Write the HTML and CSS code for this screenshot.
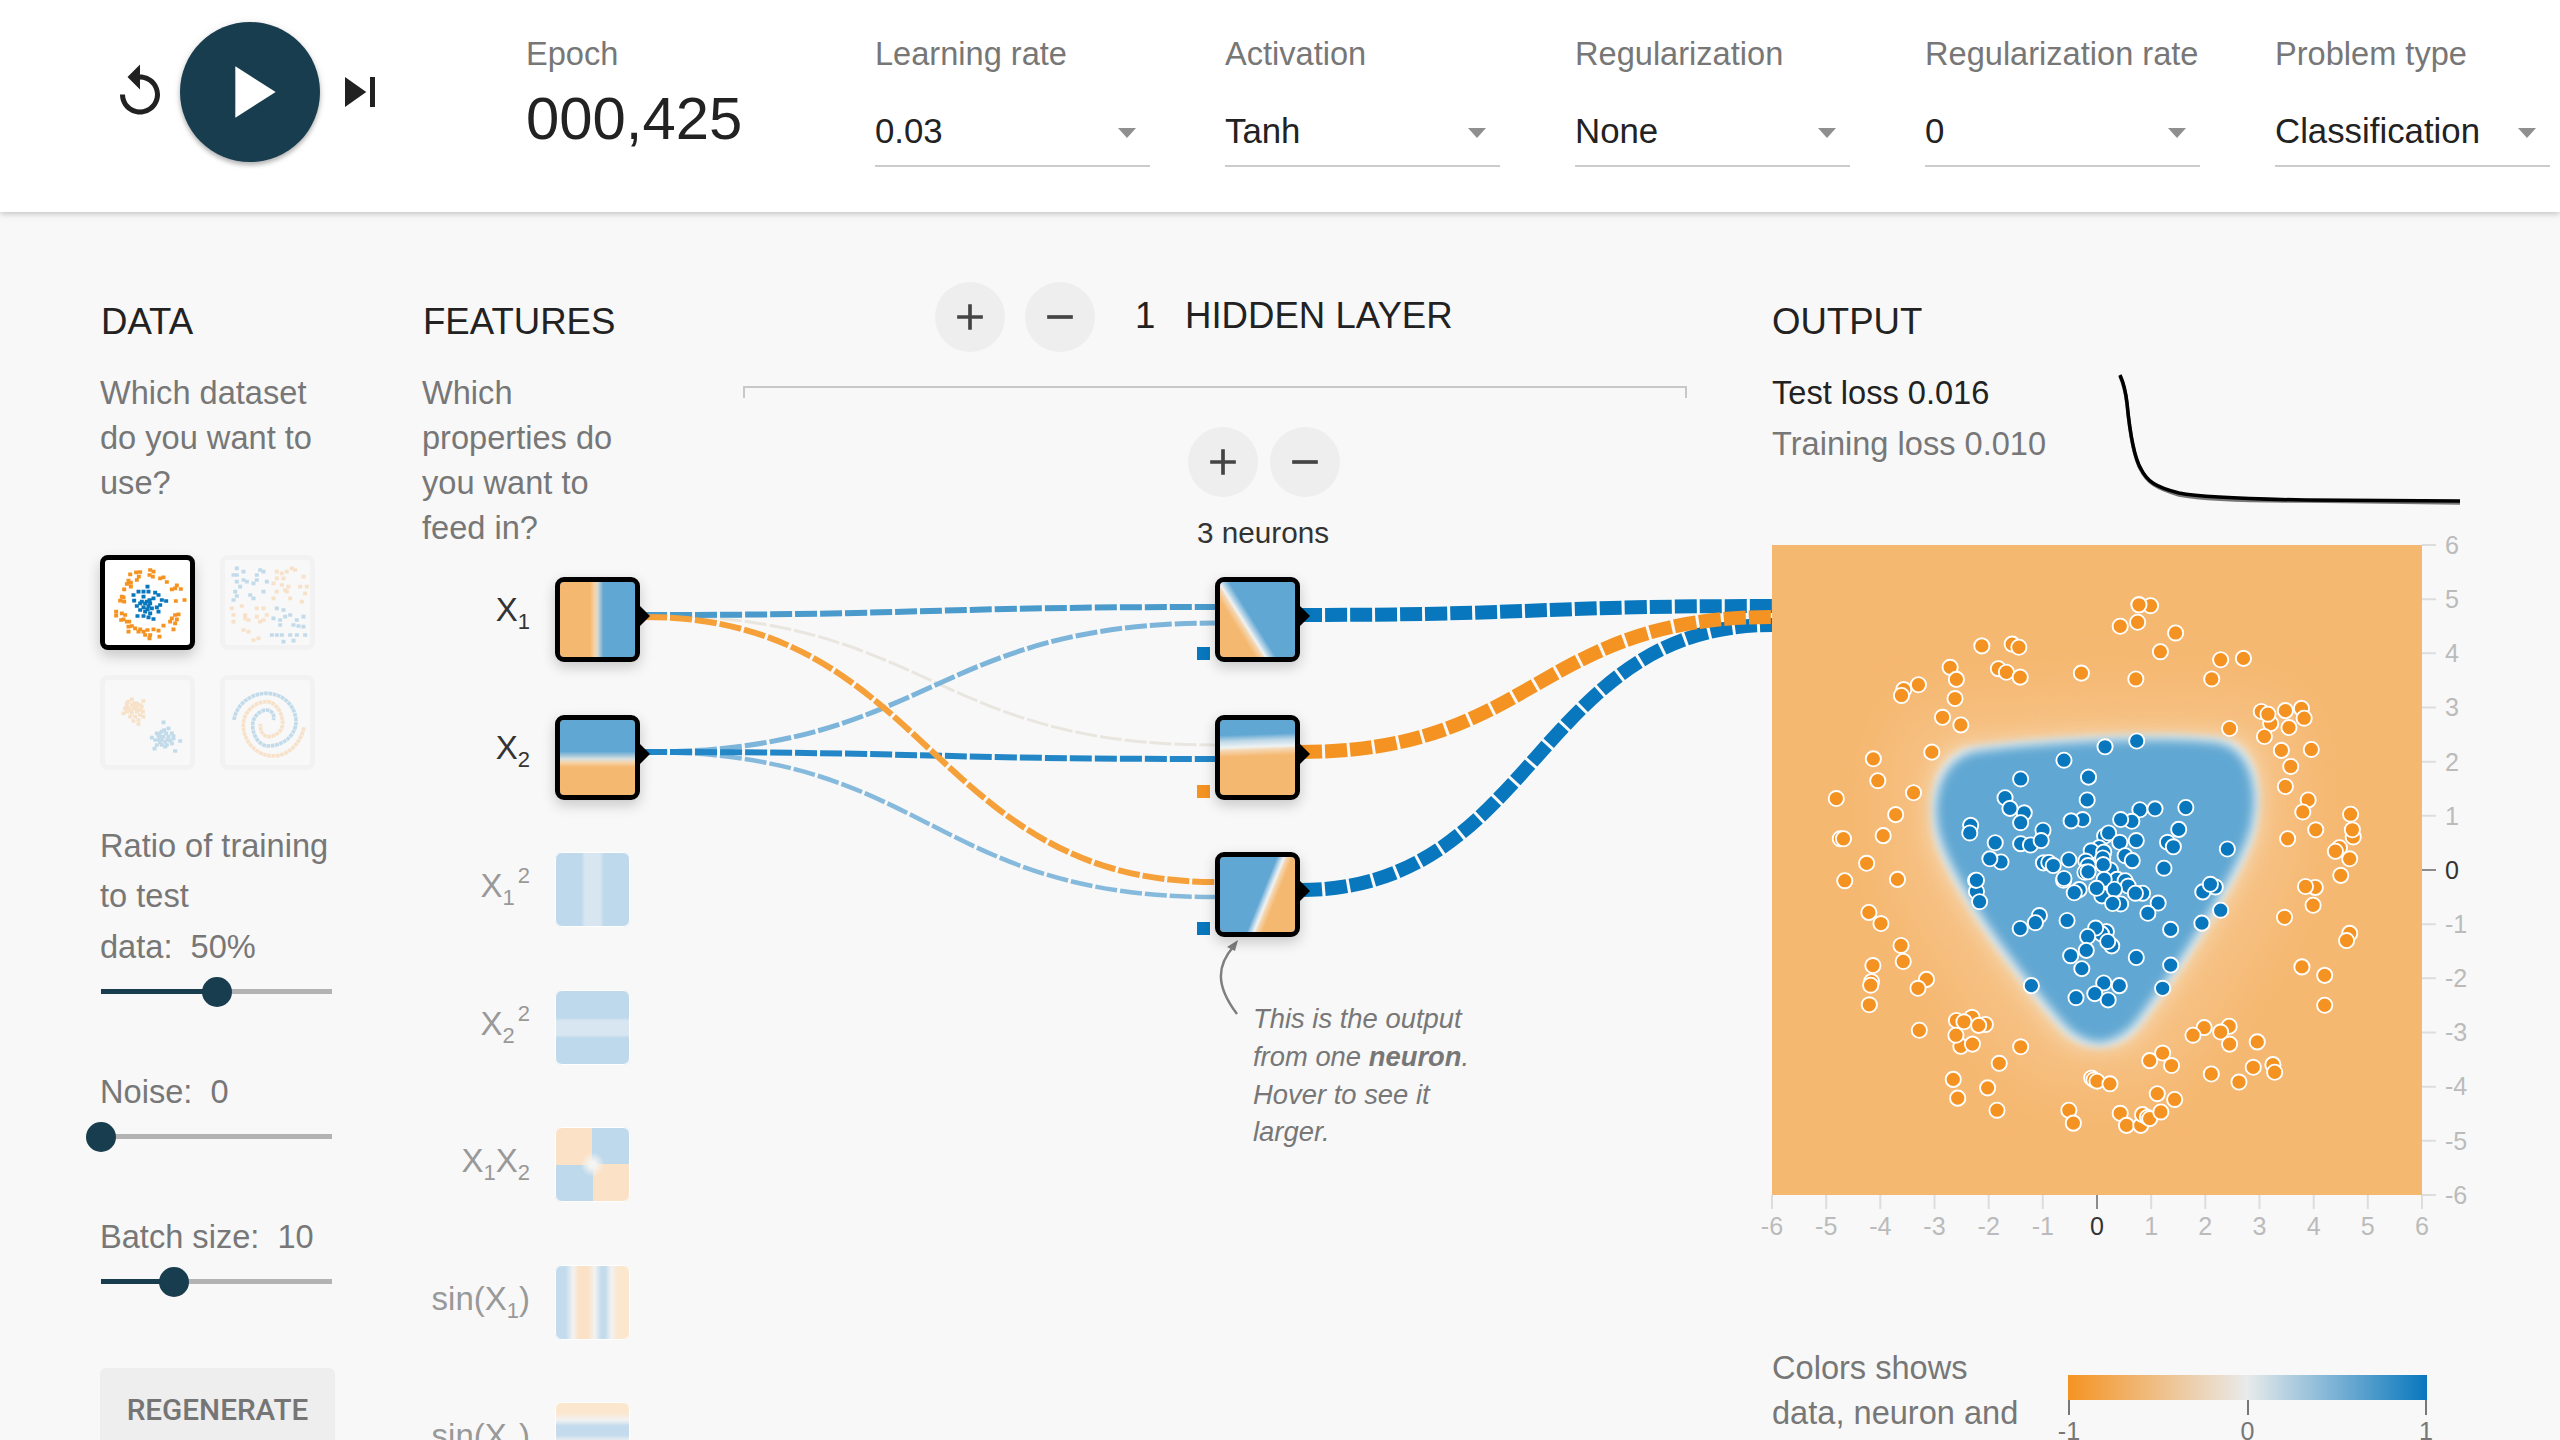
FILE: index.html
```html
<!DOCTYPE html>
<html lang="en">
<head>
<meta charset="utf-8">
<title>A Neural Network Playground</title>
<link rel="stylesheet" href="styles.css">
</head>
<body>
<header class="topbar">
  <div class="playback">
    <svg class="icon-reset" viewBox="0 0 24 24"><path d="M12 5V1L7 6l5 5V7c3.31 0 6 2.69 6 6s-2.69 6-6 6-6-2.69-6-6H4c0 4.42 3.58 8 8 8s8-3.58 8-8-3.58-8-8-8z"/></svg>
    <div class="play"><svg class="icon-play" viewBox="0 0 24 24"><path d="M8 5v14l11-7z"/></svg></div>
    <svg class="icon-step" viewBox="0 0 24 24"><path d="M6 18l8.5-6L6 6v12zM16 6v12h2V6h-2z"/></svg>
  </div>
  <div class="control epoch"><div class="label">Epoch</div><div class="epoch-value">000,425</div></div>
  <div class="control"><div class="label">Learning rate</div><div class="select">0.03</div></div>
  <div class="control"><div class="label">Activation</div><div class="select">Tanh</div></div>
  <div class="control"><div class="label">Regularization</div><div class="select">None</div></div>
  <div class="control"><div class="label">Regularization rate</div><div class="select">0</div></div>
  <div class="control"><div class="label">Problem type</div><div class="select">Classification</div></div>
</header>

<main class="main">
  <section class="col-data">
    <h4 class="heading">Data</h4>
    <p class="copy">Which dataset<br>do you want to<br>use?</p>
    <div class="datasets">
      <div class="dataset selected">
        <svg viewBox="135 120 255 255">
          <path class="dot-o" d="M210 163h1M228 157h1M240 156h1M236 170h1M230 180h1M205 182h1M212 188h1M200 192h1M212 200h1M192 208h1M270 150h1M280 155h1M268 165h1M278 170h1M300 175h1M310 172h1M320 186h1M335 208h1M350 196h1M362 207h1M345 205h1M185 230h1M190 232h1M180 242h1M192 245h1M347 243h1M373 240h1M168 275h1M168 287h1M185 280h1M195 285h1M190 298h1M183 300h1M200 305h1M207 305h1M345 285h1M355 283h1M335 295h1M350 298h1M330 305h1M345 310h1M310 317h1M340 328h1M205 320h1M215 318h1M225 325h1M240 328h1M205 335h1M235 335h1M250 335h1M262 330h1M255 345h1M270 345h1M268 355h1M295 332h1M298 350h1M280 328h1"/>
          <path class="dot-b" d="M235 215h1M250 215h1M262 200h1M265 215h1M285 218h1M220 225h1M222 242h1M295 225h1M305 240h1M318 243h1M300 255h1M250 230h1M268 240h1M280 235h1M240 250h1M230 258h1M250 262h1M265 258h1M275 265h1M290 262h1M240 270h1M255 275h1M270 280h1M295 275h1M232 288h1M250 288h1M265 292h1M280 297h1M260 245h1M245 245h1M255 250h1M270 250h1M262 268h1"/>
        </svg>
      </div>
      <div class="dataset">
        <svg viewBox="495 120 255 255">
          <path class="dot-b" d="M530 145h1M520 165h1M530 165h1M550 155h1M530 185h1M550 180h1M560 185h1M600 150h1M610 155h1M590 165h1M580 190h1M590 180h1M620 185h1M540 200h1M525 215h1M520 240h1M530 228h1M570 225h1M580 235h1M610 215h1M650 265h1M670 270h1M640 295h1M660 300h1M675 290h1M690 285h1M730 290h1M710 300h1M700 315h1M715 318h1M730 320h1M650 345h1M665 345h1M690 345h1M710 345h1M670 365h1M700 362h1M735 345h1M635 345h1M660 315h1"/>
          <path class="dot-o" d="M650 155h1M665 160h1M680 155h1M695 145h1M705 150h1M650 175h1M670 175h1M640 190h1M665 195h1M685 200h1M675 210h1M650 215h1M680 215h1M640 235h1M690 235h1M730 170h1M720 200h1M740 200h1M735 220h1M725 245h1M515 265h1M545 258h1M520 285h1M555 285h1M565 300h1M590 265h1M610 265h1M590 290h1M610 300h1M600 305h1M620 285h1M520 305h1M550 330h1M565 335h1M580 360h1M595 355h1M555 295h1"/>
        </svg>
      </div>
      <div class="dataset">
        <svg viewBox="135 480 255 255">
          <path class="dot-o" d="M190 580h1M200 550h1M215 538h1M230 550h1M250 543h1M205 565h1M220 565h1M240 570h1M250 590h1M210 590h1M225 590h1M235 600h1M220 603h1M235 612h1M195 565h1M215 555h1M230 575h1M245 560h1M205 545h1M200 575h1M215 578h1M240 585h1M228 560h1M212 572h1M240 555h1M222 550h1M200 560h1M232 568h1M248 575h1"/>
          <path class="dot-b" d="M310 607h1M275 653h1M290 640h1M305 635h1M325 625h1M335 640h1M340 655h1M295 660h1M310 650h1M325 650h1M290 675h1M305 675h1M320 675h1M335 670h1M283 686h1M345 693h1M360 663h1M300 650h1M315 665h1M285 660h1M300 668h1M318 640h1M330 662h1M312 630h1M305 660h1M322 660h1M298 640h1M340 648h1M315 680h1M295 648h1"/>
        </svg>
      </div>
      <div class="dataset">
        <svg viewBox="495 480 255 255">
          <path class="spiral-b" d="M522 600C530 550 575 520 620 520C670 520 708 560 708 605C708 645 670 678 625 678C600 678 578 650 578 615C578 590 600 570 620 570C635 570 645 585 640 600"/>
          <path class="spiral-o" d="M732 622C722 670 685 708 640 708C590 708 550 665 550 615C550 575 585 545 620 545C648 545 668 580 668 610C668 635 645 650 625 650C610 650 598 630 602 612"/>
        </svg>
      </div>
    </div>
    <div class="setting first">Ratio of training<br>to test<br>data:&nbsp; 50%</div>
    <div class="slider" style="--value:50%"><div class="slider-fill"></div><div class="slider-thumb"></div></div>
    <div class="setting">Noise:&nbsp; 0</div>
    <div class="slider" style="--value:0%"><div class="slider-fill"></div><div class="slider-thumb"></div></div>
    <div class="setting">Batch size:&nbsp; 10</div>
    <div class="slider" style="--value:31.6%"><div class="slider-fill"></div><div class="slider-thumb"></div></div>
    <div class="regenerate">REGENERATE</div>
  </section>

  <section class="col-net">
    <svg class="links" viewBox="423 212 1349 1228">
      <g class="link">
        <path class="l-gray" d="M645 615C930 615 930 745 1215 745"/>
        <path class="l-mid1" d="M645 615C930 615 930 607 1215 607"/>
        <path class="l-light1" d="M645 752C930 752 930 623 1215 623"/>
        <path class="l-light2" d="M645 752C930 752 930 897 1215 897"/>
        <path class="l-mid2" d="M645 752C930 752 930 759 1215 759"/>
        <path class="l-orange" d="M645 617C930 617 930 882 1215 882"/>
        <path class="l-out b" d="M1300 615C1536 615 1536 606 1772 606"/>
        <path class="l-out b" d="M1300 890C1536 890 1536 625 1772 625"/>
        <path class="l-out o" d="M1300 752C1536 752 1536 617 1772 617"/>
      </g>
      <path class="note-arrow" d="M1237 1014C1215 985 1217 965 1234 946"/>
      <path class="note-head" d="M1238 940L1227 947L1235 951Z"/>
    </svg>

    <div class="col-features">
      <h4 class="heading">Features</h4>
      <p class="copy">Which<br>properties do<br>you want to<br>feed in?</p>
      <div class="feature-list">
        <div class="feature on"><span class="f-label">X<sub>1</sub></span><div class="node hm-x1"></div></div>
        <div class="feature on"><span class="f-label">X<sub>2</sub></span><div class="node hm-x2"></div></div>
        <div class="feature"><span class="f-label">X<sub>1</sub><sup>2</sup></span><div class="thumb hm-x1s"></div></div>
        <div class="feature"><span class="f-label">X<sub>2</sub><sup>2</sup></span><div class="thumb hm-x2s"></div></div>
        <div class="feature"><span class="f-label">X<sub>1</sub>X<sub>2</sub></span><div class="thumb hm-xx"></div></div>
        <div class="feature"><span class="f-label">sin(X<sub>1</sub>)</span><div class="thumb hm-sin1"></div></div>
        <div class="feature"><span class="f-label">sin(X<sub>2</sub>)</span><div class="thumb hm-sin2"></div></div>
      </div>
    </div>

    <div class="col-hidden">
      <div class="layers-head">
        <div class="round"><svg viewBox="0 0 24 24"><path d="M19 13h-6v6h-2v-6H5v-2h6V5h2v6h6v2z"/></svg></div>
        <div class="round"><svg viewBox="0 0 24 24"><path d="M19 13H5v-2h14v2z"/></svg></div>
        <div class="layers-count">1</div>
        <div class="layers-title">HIDDEN LAYER</div>
      </div>
      <div class="bracket"></div>
      <div class="layer">
        <div class="layer-btns">
          <div class="round"><svg viewBox="0 0 24 24"><path d="M19 13h-6v6h-2v-6H5v-2h6V5h2v6h6v2z"/></svg></div>
          <div class="round"><svg viewBox="0 0 24 24"><path d="M19 13H5v-2h14v2z"/></svg></div>
        </div>
        <div class="neurons">3 neurons</div>
        <div class="neuron-list">
          <div class="neuron-row"><i class="bias b"></i><div class="node hm-h1"></div></div>
          <div class="neuron-row"><i class="bias o"></i><div class="node hm-h2"></div></div>
          <div class="neuron-row"><i class="bias b"></i><div class="node hm-h3"></div></div>
        </div>
      </div>
    </div>

    <div class="callout">This is the output<br>from one <b>neuron</b>.<br>Hover to see it<br>larger.</div>
  </section>

  <section class="col-output">
    <h4 class="heading">Output</h4>
    <div class="loss-row">
      <div class="losses">
        <div class="loss-test">Test loss 0.016</div>
        <div class="loss-train">Training loss 0.010</div>
      </div>
      <svg class="loss-chart" viewBox="2115 367 350 140">
        <path class="curve-train" d="M2120 376C2124 385 2126 395 2127 404C2130 435 2135 460 2141 470C2147 482 2155 488 2179 495C2200 499 2250 501 2306 501L2460 503"/>
        <path class="curve-test" d="M2120 375C2124 384 2126 394 2127 403C2130 434 2135 459 2141 469C2147 481 2155 487 2179 493C2200 497 2250 499 2306 500L2460 501"/>
      </svg>
    </div>
    <svg class="heat" viewBox="0 0 720 710">
      <defs>
        <filter id="glow-wide" x="-60%" y="-60%" width="220%" height="220%"><feMorphology operator="dilate" radius="90"/><feGaussianBlur stdDeviation="55"/></filter>
        <filter id="glow-near" x="-30%" y="-30%" width="160%" height="160%"><feMorphology operator="dilate" radius="14"/><feGaussianBlur stdDeviation="20"/></filter>
        <filter id="glow-edge" x="-10%" y="-10%" width="120%" height="120%"><feMorphology operator="dilate" radius="3"/><feGaussianBlur stdDeviation="8"/></filter>
        <filter id="glow-core" x="-10%" y="-10%" width="120%" height="120%"><feMorphology operator="erode" radius="7"/><feGaussianBlur stdDeviation="12"/></filter>
        <clipPath id="heat-clip"><rect width="650" height="650"/></clipPath>
      </defs>
      <g clip-path="url(#heat-clip)">
        <rect class="heat-bg" width="650" height="650"/>
        <g transform="scale(.44643) translate(-27 -34)">
          <path class="heat-wide" filter="url(#glow-wide)" d="M470 490C600 470 900 450 1040 470C1110 490 1125 580 1110 660C1095 760 900 1050 840 1120C790 1170 720 1170 670 1110C600 1030 420 800 392 680C375 590 400 510 470 490Z"/>
          <path class="heat-halo" filter="url(#glow-near)" d="M470 490C600 470 900 450 1040 470C1110 490 1125 580 1110 660C1095 760 900 1050 840 1120C790 1170 720 1170 670 1110C600 1030 420 800 392 680C375 590 400 510 470 490Z"/>
          <path class="heat-edge" filter="url(#glow-edge)" d="M470 490C600 470 900 450 1040 470C1110 490 1125 580 1110 660C1095 760 900 1050 840 1120C790 1170 720 1170 670 1110C600 1030 420 800 392 680C375 590 400 510 470 490Z"/>
          <path class="heat-core" filter="url(#glow-core)" d="M470 490C600 470 900 450 1040 470C1110 490 1125 580 1110 660C1095 760 900 1050 840 1120C790 1170 720 1170 670 1110C600 1030 420 800 392 680C375 590 400 510 470 490Z"/>
          <g class="dots o">
            <circle cx="849" cy="168"/><circle cx="875" cy="170"/><circle cx="849" cy="168"/><circle cx="807" cy="216"/><circle cx="846" cy="207"/><circle cx="931" cy="231"/><circle cx="897" cy="273"/><circle cx="1032" cy="291"/><circle cx="1083" cy="288"/><circle cx="1012" cy="334"/><circle cx="842" cy="334"/><circle cx="720" cy="321"/><circle cx="497" cy="260"/><circle cx="565" cy="256"/><circle cx="580" cy="263"/><circle cx="534" cy="311"/><circle cx="552" cy="319"/><circle cx="583" cy="330"/><circle cx="426" cy="308"/><circle cx="440" cy="335"/><circle cx="437" cy="378"/><circle cx="355" cy="347"/><circle cx="322" cy="358"/><circle cx="317" cy="371"/><circle cx="409" cy="420"/><circle cx="450" cy="437"/><circle cx="385" cy="498"/><circle cx="254" cy="513"/><circle cx="264" cy="562"/><circle cx="344" cy="589"/><circle cx="171" cy="602"/><circle cx="304" cy="638"/><circle cx="276" cy="685"/><circle cx="180" cy="692"/><circle cx="187" cy="692"/><circle cx="239" cy="747"/><circle cx="190" cy="786"/><circle cx="308" cy="783"/><circle cx="244" cy="857"/><circle cx="271" cy="882"/><circle cx="316" cy="931"/><circle cx="321" cy="967"/><circle cx="253" cy="976"/><circle cx="250" cy="1012"/><circle cx="248" cy="1020"/><circle cx="245" cy="1064"/><circle cx="373" cy="1007"/><circle cx="354" cy="1027"/><circle cx="357" cy="1121"/><circle cx="475" cy="1092"/><circle cx="440" cy="1099"/><circle cx="457" cy="1102"/><circle cx="505" cy="1108"/><circle cx="490" cy="1110"/><circle cx="450" cy="1157"/><circle cx="439" cy="1132"/><circle cx="476" cy="1152"/><circle cx="584" cy="1158"/><circle cx="536" cy="1195"/><circle cx="433" cy="1231"/><circle cx="510" cy="1250"/><circle cx="443" cy="1273"/><circle cx="531" cy="1300"/><circle cx="743" cy="1228"/><circle cx="748" cy="1232"/><circle cx="755" cy="1235"/><circle cx="784" cy="1241"/><circle cx="692" cy="1300"/><circle cx="702" cy="1329"/><circle cx="807" cy="1307"/><circle cx="821" cy="1334"/><circle cx="853" cy="1334"/><circle cx="857" cy="1310"/><circle cx="868" cy="1316"/><circle cx="873" cy="1319"/><circle cx="898" cy="1304"/><circle cx="929" cy="1276"/><circle cx="890" cy="1263"/><circle cx="873" cy="1189"/><circle cx="902" cy="1172"/><circle cx="922" cy="1200"/><circle cx="995" cy="1115"/><circle cx="970" cy="1132"/><circle cx="1051" cy="1112"/><circle cx="1032" cy="1125"/><circle cx="1052" cy="1152"/><circle cx="1114" cy="1147"/><circle cx="1011" cy="1219"/><circle cx="1073" cy="1237"/><circle cx="1105" cy="1204"/><circle cx="1149" cy="1198"/><circle cx="1153" cy="1215"/><circle cx="1052" cy="445"/><circle cx="1123" cy="407"/><circle cx="1144" cy="434"/><circle cx="1138" cy="413"/><circle cx="1213" cy="400"/><circle cx="1177" cy="405"/><circle cx="1219" cy="422"/><circle cx="1185" cy="443"/><circle cx="1130" cy="463"/><circle cx="1168" cy="494"/><circle cx="1235" cy="492"/><circle cx="1189" cy="530"/><circle cx="1177" cy="575"/><circle cx="1228" cy="605"/><circle cx="1216" cy="632"/><circle cx="1245" cy="672"/><circle cx="1323" cy="637"/><circle cx="1329" cy="688"/><circle cx="1327" cy="672"/><circle cx="1182" cy="692"/><circle cx="1298" cy="712"/><circle cx="1289" cy="720"/><circle cx="1321" cy="737"/><circle cx="1301" cy="774"/><circle cx="1244" cy="801"/><circle cx="1222" cy="799"/><circle cx="1239" cy="841"/><circle cx="1175" cy="868"/><circle cx="1321" cy="904"/><circle cx="1314" cy="920"/><circle cx="1214" cy="979"/><circle cx="1265" cy="998"/><circle cx="1265" cy="1065"/>
          </g>
          <g class="dots b">
            <circle cx="844" cy="473"/><circle cx="773" cy="486"/><circle cx="681" cy="516"/><circle cx="736" cy="554"/><circle cx="584" cy="558"/><circle cx="549" cy="600"/><circle cx="592" cy="634"/><circle cx="560" cy="624"/><circle cx="584" cy="656"/><circle cx="733" cy="605"/><circle cx="723" cy="649"/><circle cx="697" cy="652"/><circle cx="851" cy="627"/><circle cx="885" cy="625"/><circle cx="954" cy="622"/><circle cx="833" cy="653"/><circle cx="808" cy="649"/><circle cx="772" cy="686"/><circle cx="781" cy="679"/><circle cx="938" cy="671"/><circle cx="472" cy="662"/><circle cx="470" cy="679"/><circle cx="634" cy="673"/><circle cx="584" cy="703"/><circle cx="606" cy="706"/><circle cx="630" cy="696"/><circle cx="527" cy="701"/><circle cx="843" cy="696"/><circle cx="806" cy="700"/><circle cx="913" cy="700"/><circle cx="926" cy="710"/><circle cx="1047" cy="715"/><circle cx="540" cy="744"/><circle cx="515" cy="737"/><circle cx="635" cy="746"/><circle cx="647" cy="745"/><circle cx="657" cy="752"/><circle cx="692" cy="739"/><circle cx="760" cy="712"/><circle cx="742" cy="719"/><circle cx="770" cy="722"/><circle cx="768" cy="735"/><circle cx="730" cy="742"/><circle cx="735" cy="752"/><circle cx="818" cy="730"/><circle cx="834" cy="741"/><circle cx="905" cy="758"/><circle cx="785" cy="762"/><circle cx="769" cy="750"/><circle cx="728" cy="767"/><circle cx="735" cy="766"/><circle cx="680" cy="785"/><circle cx="681" cy="781"/><circle cx="800" cy="783"/><circle cx="818" cy="786"/><circle cx="771" cy="783"/><circle cx="825" cy="798"/><circle cx="485" cy="810"/><circle cx="483" cy="785"/><circle cx="485" cy="785"/><circle cx="492" cy="833"/><circle cx="715" cy="806"/><circle cx="704" cy="813"/><circle cx="766" cy="820"/><circle cx="754" cy="803"/><circle cx="794" cy="805"/><circle cx="857" cy="814"/><circle cx="841" cy="814"/><circle cx="892" cy="836"/><circle cx="808" cy="838"/><circle cx="790" cy="837"/><circle cx="869" cy="859"/><circle cx="1020" cy="800"/><circle cx="992" cy="811"/><circle cx="1009" cy="794"/><circle cx="1032" cy="852"/><circle cx="990" cy="881"/><circle cx="626" cy="864"/><circle cx="617" cy="880"/><circle cx="583" cy="893"/><circle cx="688" cy="875"/><circle cx="776" cy="900"/><circle cx="765" cy="905"/><circle cx="752" cy="892"/><circle cx="734" cy="911"/><circle cx="920" cy="895"/><circle cx="788" cy="932"/><circle cx="779" cy="922"/><circle cx="731" cy="942"/><circle cx="696" cy="954"/><circle cx="843" cy="958"/><circle cx="920" cy="975"/><circle cx="721" cy="983"/><circle cx="608" cy="1021"/><circle cx="770" cy="1015"/><circle cx="805" cy="1021"/><circle cx="902" cy="1027"/><circle cx="750" cy="1039"/><circle cx="708" cy="1048"/><circle cx="780" cy="1053"/>
          </g>
        </g>
      </g>
      <path class="ax-line" d="M0 650v14M54.2 650v14M108.3 650v14M162.5 650v14M216.7 650v14M270.8 650v14M379.2 650v14M433.3 650v14M487.5 650v14M541.7 650v14M595.8 650v14M650 650v14M650 0h14M650 54.2h14M650 108.3h14M650 162.5h14M650 216.7h14M650 270.8h14M650 379.2h14M650 433.3h14M650 487.5h14M650 541.7h14M650 595.8h14M650 650h14"/>
      <path class="ax-zero" d="M325 650v14M650 325h14"/>
      <g class="ax-x">
        <text x="0" y="690">-6</text><text x="54.2" y="690">-5</text><text x="108.3" y="690">-4</text><text x="162.5" y="690">-3</text><text x="216.7" y="690">-2</text><text x="270.8" y="690">-1</text><text class="zero" x="325" y="690">0</text><text x="379.2" y="690">1</text><text x="433.3" y="690">2</text><text x="487.5" y="690">3</text><text x="541.7" y="690">4</text><text x="595.8" y="690">5</text><text x="650" y="690">6</text>
      </g>
      <g class="ax-y">
        <text x="673" y="9">6</text><text x="673" y="63">5</text><text x="673" y="117">4</text><text x="673" y="171">3</text><text x="673" y="226">2</text><text x="673" y="280">1</text><text class="zero" x="673" y="334">0</text><text x="673" y="388">-1</text><text x="673" y="442">-2</text><text x="673" y="496">-3</text><text x="673" y="550">-4</text><text x="673" y="605">-5</text><text x="673" y="659">-6</text>
      </g>
    </svg>
    <div class="legend">
      <div class="legend-text">Colors shows<br>data, neuron and</div>
      <div class="legend-scale">
        <div class="legend-bar"></div>
        <div class="legend-ticks"><div class="tick"><span>-1</span></div><div class="tick"><span>0</span></div><div class="tick"><span>1</span></div></div>
      </div>
    </div>
  </section>
</main>
</body>
</html>
```
FILE: styles.css
```css
* { box-sizing: border-box; }
html, body { margin: 0; height: 1440px; overflow: hidden; }
body {
  background: #f8f8f8;
  color: #777;
  font-family: "Liberation Sans", Arial, sans-serif;
  font-size: 32.6px;
}

/* top bar */
.topbar {
  position: relative;
  z-index: 3;
  display: flex;
  height: 212px;
  background: #fff;
  box-shadow: 0 2px 5px rgba(0, 0, 0, .16), 0 2px 10px rgba(0, 0, 0, .06);
  white-space: nowrap;
}
.playback {
  display: flex;
  align-items: center;
  flex: none;
  width: 526px;
  height: 184px;
  padding-left: 110px;
  gap: 10px;
}
.icon-reset, .icon-step { width: 60px; height: 60px; fill: #212121; flex: none; }
.play {
  display: flex;
  align-items: center;
  justify-content: center;
  width: 140px;
  height: 140px;
  flex: none;
  border-radius: 50%;
  background: #183d4e;
  box-shadow: 0 3px 4px rgba(0, 0, 0, .25), 0 1px 8px rgba(0, 0, 0, .1);
}
.icon-play { width: 88px; height: 88px; fill: #fff; }
.control { flex: none; width: 350px; padding-top: 32px; }
.epoch { width: 349px; }
.label { line-height: 44px; color: #777; }
.epoch-value { margin-top: 8px; font-size: 59.8px; line-height: 70px; color: #222; }
.select {
  position: relative;
  width: 275px;
  height: 60px;
  margin-top: 31px;
  border-bottom: 2px solid #ccc;
  font-size: 34.8px;
  line-height: 48px;
  color: #222;
}
.select::after {
  content: "";
  position: absolute;
  right: 14px;
  top: 21px;
  border-left: 9px solid transparent;
  border-right: 9px solid transparent;
  border-top: 10px solid #8f8f8f;
}

/* page */
.main { display: flex; height: 1228px; padding-left: 101px; overflow: hidden; }
.heading {
  margin: 90px 0 0;
  font-size: 36.6px;
  font-weight: 400;
  line-height: 40px;
  color: #222;
  text-transform: uppercase;
}
.copy { margin: 27.5px 0 0 -1px; line-height: 45px; }

/* data column */
.col-data { flex: none; width: 322px; }
.datasets {
  display: grid;
  grid-template-columns: 95px 95px;
  grid-auto-rows: 95px;
  gap: 25px;
  margin-top: 50.5px;
  margin-left: -1px;
}
.dataset { border: 5px solid #f2f2f2; border-radius: 8px; overflow: hidden; }
.dataset svg { display: block; width: 85px; height: 85px; opacity: .22; }
.dataset.selected { border-color: #000; background: #fff; box-shadow: 0 6px 14px rgba(0, 0, 0, .2); }
.dataset.selected svg { opacity: 1; }
.dot-o, .dot-b { fill: none; stroke-width: 11; stroke-linecap: square; }
.dot-o { stroke: #f59322; }
.dot-b { stroke: #0877bd; }
.spiral-o, .spiral-b { fill: none; stroke-width: 11; stroke-dasharray: 11 2; }
.spiral-o { stroke: #f59322; }
.spiral-b { stroke: #0877bd; }
.setting { margin: 60px 0 0 -1px; line-height: 50px; }
.setting.first { margin-top: 51px; line-height: 50.3px; }
.slider {
  position: relative;
  width: 231px;
  height: 30px;
  margin-top: 5px;
  background: linear-gradient(#b3b3b3, #b3b3b3) center / 100% 5px no-repeat;
}
.slider-fill {
  position: absolute;
  left: 0;
  top: 12.5px;
  width: var(--value);
  height: 5px;
  background: #183d4e;
}
.slider-thumb {
  position: absolute;
  top: 0;
  left: var(--value);
  width: 30px;
  height: 30px;
  margin-left: -15px;
  border-radius: 50%;
  background: #183d4e;
}
.regenerate {
  width: 235px;
  height: 84px;
  margin: 71px 0 0 -1px;
  border-radius: 6px;
  background: #eee;
  color: #757575;
  font-family: Roboto, "Liberation Sans", sans-serif;
  font-size: 29.7px;
  font-weight: 500;
  line-height: 84px;
  text-align: center;
}

/* network column */
.col-net { position: relative; display: flex; flex: none; width: 1349px; }
.links { position: absolute; left: 0; top: 0; width: 1349px; height: 1228px; }
.link path { fill: none; stroke-dasharray: 22 3; }
.l-gray { stroke: #e9e6e0; stroke-width: 3px; }
.l-mid1 { stroke: #4a9acc; stroke-width: 6px; }
.l-mid2 { stroke: #2386c6; stroke-width: 6px; }
.l-light1 { stroke: #7db5da; stroke-width: 5px; }
.l-light2 { stroke: #86badc; stroke-width: 4.5px; }
.l-orange { stroke: #f6a03a; stroke-width: 6px; }
.link .l-out { stroke-width: 14px; }
.link .l-out.b { stroke: #0877bd; }
.link .l-out.o { stroke: #f59322; }
.note-arrow { fill: none; stroke: #7f7f7f; stroke-width: 2.5px; }
.note-head { fill: #7f7f7f; }
.col-features { position: relative; flex: none; width: 320px; }
.feature-list { margin-top: 27.5px; }
.feature { display: flex; align-items: flex-start; height: 137.5px; color: #999; }
.feature.on { color: #333; }
.f-label {
  flex: none;
  width: 132px;
  padding: 0 25px 0 0;
  margin-top: 8px;
  text-align: right;
  font-size: 33px;
  line-height: 50px;
  white-space: nowrap;
}
.feature:not(.on) .f-label { margin-top: 9px; }
.f-label sub, .f-label sup { font-size: 22px; line-height: 0; }
.f-label sub { vertical-align: -8px; }
.f-label sup { vertical-align: 14px; margin-left: 3px; }
.node {
  position: relative;
  z-index: 1;
  flex: none;
  width: 85px;
  height: 85px;
  border: 5px solid #000;
  border-radius: 9px;
  background-clip: padding-box;
  box-shadow: 0 5px 14px rgba(0, 0, 0, .2);
}
.node::after {
  content: "";
  position: absolute;
  left: 80px;
  top: 24px;
  border-left: 10px solid #000;
  border-top: 10px solid transparent;
  border-bottom: 10px solid transparent;
}
.thumb { flex: none; width: 75px; height: 75px; border-radius: 7px; outline: 1px solid #fff; outline-offset: -1px; }
.hm-x1 { background-image: linear-gradient(90deg, #f5b871 40%, #f6d3a6 46%, #d9d9d2 50%, #61a7d3 58%); }
.hm-x2 { background-image: linear-gradient(0deg, #f5b871 37%, #f6d3a6 43%, #d9e0e0 48%, #61a7d3 58%); }
.hm-h1 { background-image: linear-gradient(58deg, #f5b871 29%, #f5d7b2 35%, #eff3f4 37.5%, #c3dbeb 40%, #61a7d3 46%); }
.hm-h2 { background-image: linear-gradient(178deg, #61a7d3 20%, #bfd8e8 28%, #eef3f4 36%, #f5d7b2 40%, #f5b871 48%); }
.hm-h3 { background-image: linear-gradient(112deg, #61a7d3 54%, #c3dbeb 58.5%, #eff3f4 61%, #f5d7b2 63.5%, #f5b871 69%); }
.hm-x1s { background: linear-gradient(90deg, #bfd9ec 35%, #d7e6f0 40%, #d7e6f0 60%, #bfd9ec 65%); }
.hm-x2s { background: linear-gradient(180deg, #bfd9ec 37%, #d7e6f0 41%, #d7e6f0 60%, #bfd9ec 64%); }
.hm-xx {
  background:
    radial-gradient(circle at 50% 50%, #f4f4f2 0, #f4f4f2 3px, rgba(244, 244, 242, 0) 12px),
    conic-gradient(#bfd9ec 0 90deg, #fbe2c6 90deg 180deg, #bfd9ec 180deg 270deg, #fbe2c6 270deg 360deg);
}
.hm-sin1 { background: linear-gradient(90deg, #c3dbed 14%, #f2f2f1 24%, #fbe2c6 32%, #fbe2c6 44%, #f2f2f1 53%, #c3dbed 62%, #c3dbed 67%, #f2f2f1 75%, #fbe6ce 84%); }
.hm-sin2 { background: linear-gradient(180deg, #fbe6ce 14%, #f2f2f1 24%, #c3dbed 32%, #c3dbed 44%, #f2f2f1 53%, #fbe2c6 62%, #fbe2c6 67%, #f2f2f1 75%, #c3dbed 84%); }

.col-hidden { position: relative; flex: none; width: 944px; }
.layers-head {
  display: flex;
  align-items: center;
  height: 70px;
  margin-top: 70px;
  padding-left: 192px;
  gap: 20px;
  color: #222;
}
.round {
  display: flex;
  align-items: center;
  justify-content: center;
  flex: none;
  width: 70px;
  height: 70px;
  border-radius: 50%;
  background: #eee;
}
.round svg { width: 44px; height: 44px; fill: #444; }
.layers-count { margin-left: 20px; width: 50px; font-size: 36.6px; line-height: 40px; margin-top: -2px; }
.layers-title { margin-left: -20px; font-size: 36.6px; line-height: 40px; margin-top: -2px; white-space: nowrap; }
.bracket {
  height: 12px;
  margin-top: 34px;
  border: 2px solid #c8c8c8;
  border-bottom: none;
}
.layer { width: 170px; margin: 29px 0 0 445px; position: relative; }
.layer-btns { display: flex; gap: 12px; }
.neurons { width: 150px; margin-top: 14px; text-align: center; font-size: 29.7px; line-height: 44px; color: #333; white-space: nowrap; }
.neuron-list { margin-top: 22px; }
.neuron-row { position: relative; height: 137.7px; margin-left: 27px; }
.bias { position: absolute; left: -18px; top: 70px; width: 13px; height: 13px; }
.bias.b { background: #0877bd; }
.bias.o { background: #f59322; }
.callout {
  position: absolute;
  left: 830px;
  top: 788px;
  font-size: 27.4px;
  font-style: italic;
  line-height: 37.8px;
  color: #777;
  white-space: nowrap;
}
.callout b { font-weight: 700; }

/* output column */
.col-output { flex: none; width: 788px; }
.loss-row { display: flex; height: 178px; margin-top: 25px; }
.losses { flex: none; width: 343px; line-height: 51px; }
.loss-test { color: #222; }
.loss-chart { flex: none; width: 350px; height: 140px; }
.curve-test, .curve-train { fill: none; stroke-width: 3.5px; }
.curve-test { stroke: #000; }
.curve-train { stroke: #777; }
.heat { display: block; width: 720px; height: 710px; overflow: visible; }
.heat-bg { fill: #f5b871; }
.heat-wide { fill: #f6c184; }
.heat-halo { fill: #f7d5ab; }
.heat-edge { fill: #f5f5f2; }
.heat-core { fill: #61a7d3; }
.dots { stroke: #fff; stroke-width: 4.2px; }
.dots circle { r: 17px; }
.dots.o { fill: #f59322; }
.dots.b { fill: #0877bd; }
.ax-line { stroke: #ddd; stroke-width: 2px; fill: none; }
.ax-zero { stroke: #8c8c8c; stroke-width: 2px; fill: none; }
.ax-x text, .ax-y text { font-size: 25.1px; fill: #bbb; }
.ax-x text { text-anchor: middle; }
.ax-x .zero, .ax-y .zero { fill: #333; }
.legend { display: flex; margin-top: 89.5px; }
.legend-text { flex: none; width: 296px; line-height: 45px; }
.legend-scale { flex: none; width: 359px; padding-top: 30.5px; }
.legend-bar { height: 25px; background: linear-gradient(90deg, #f59322, #e8eaeb 50%, #0877bd); }
.legend-ticks { display: flex; justify-content: space-between; }
.tick { position: relative; width: 2px; height: 15px; background: #777; }
.tick span { position: absolute; left: 1px; top: 17px; transform: translateX(-50%); font-size: 25.1px; color: #777; }
```
